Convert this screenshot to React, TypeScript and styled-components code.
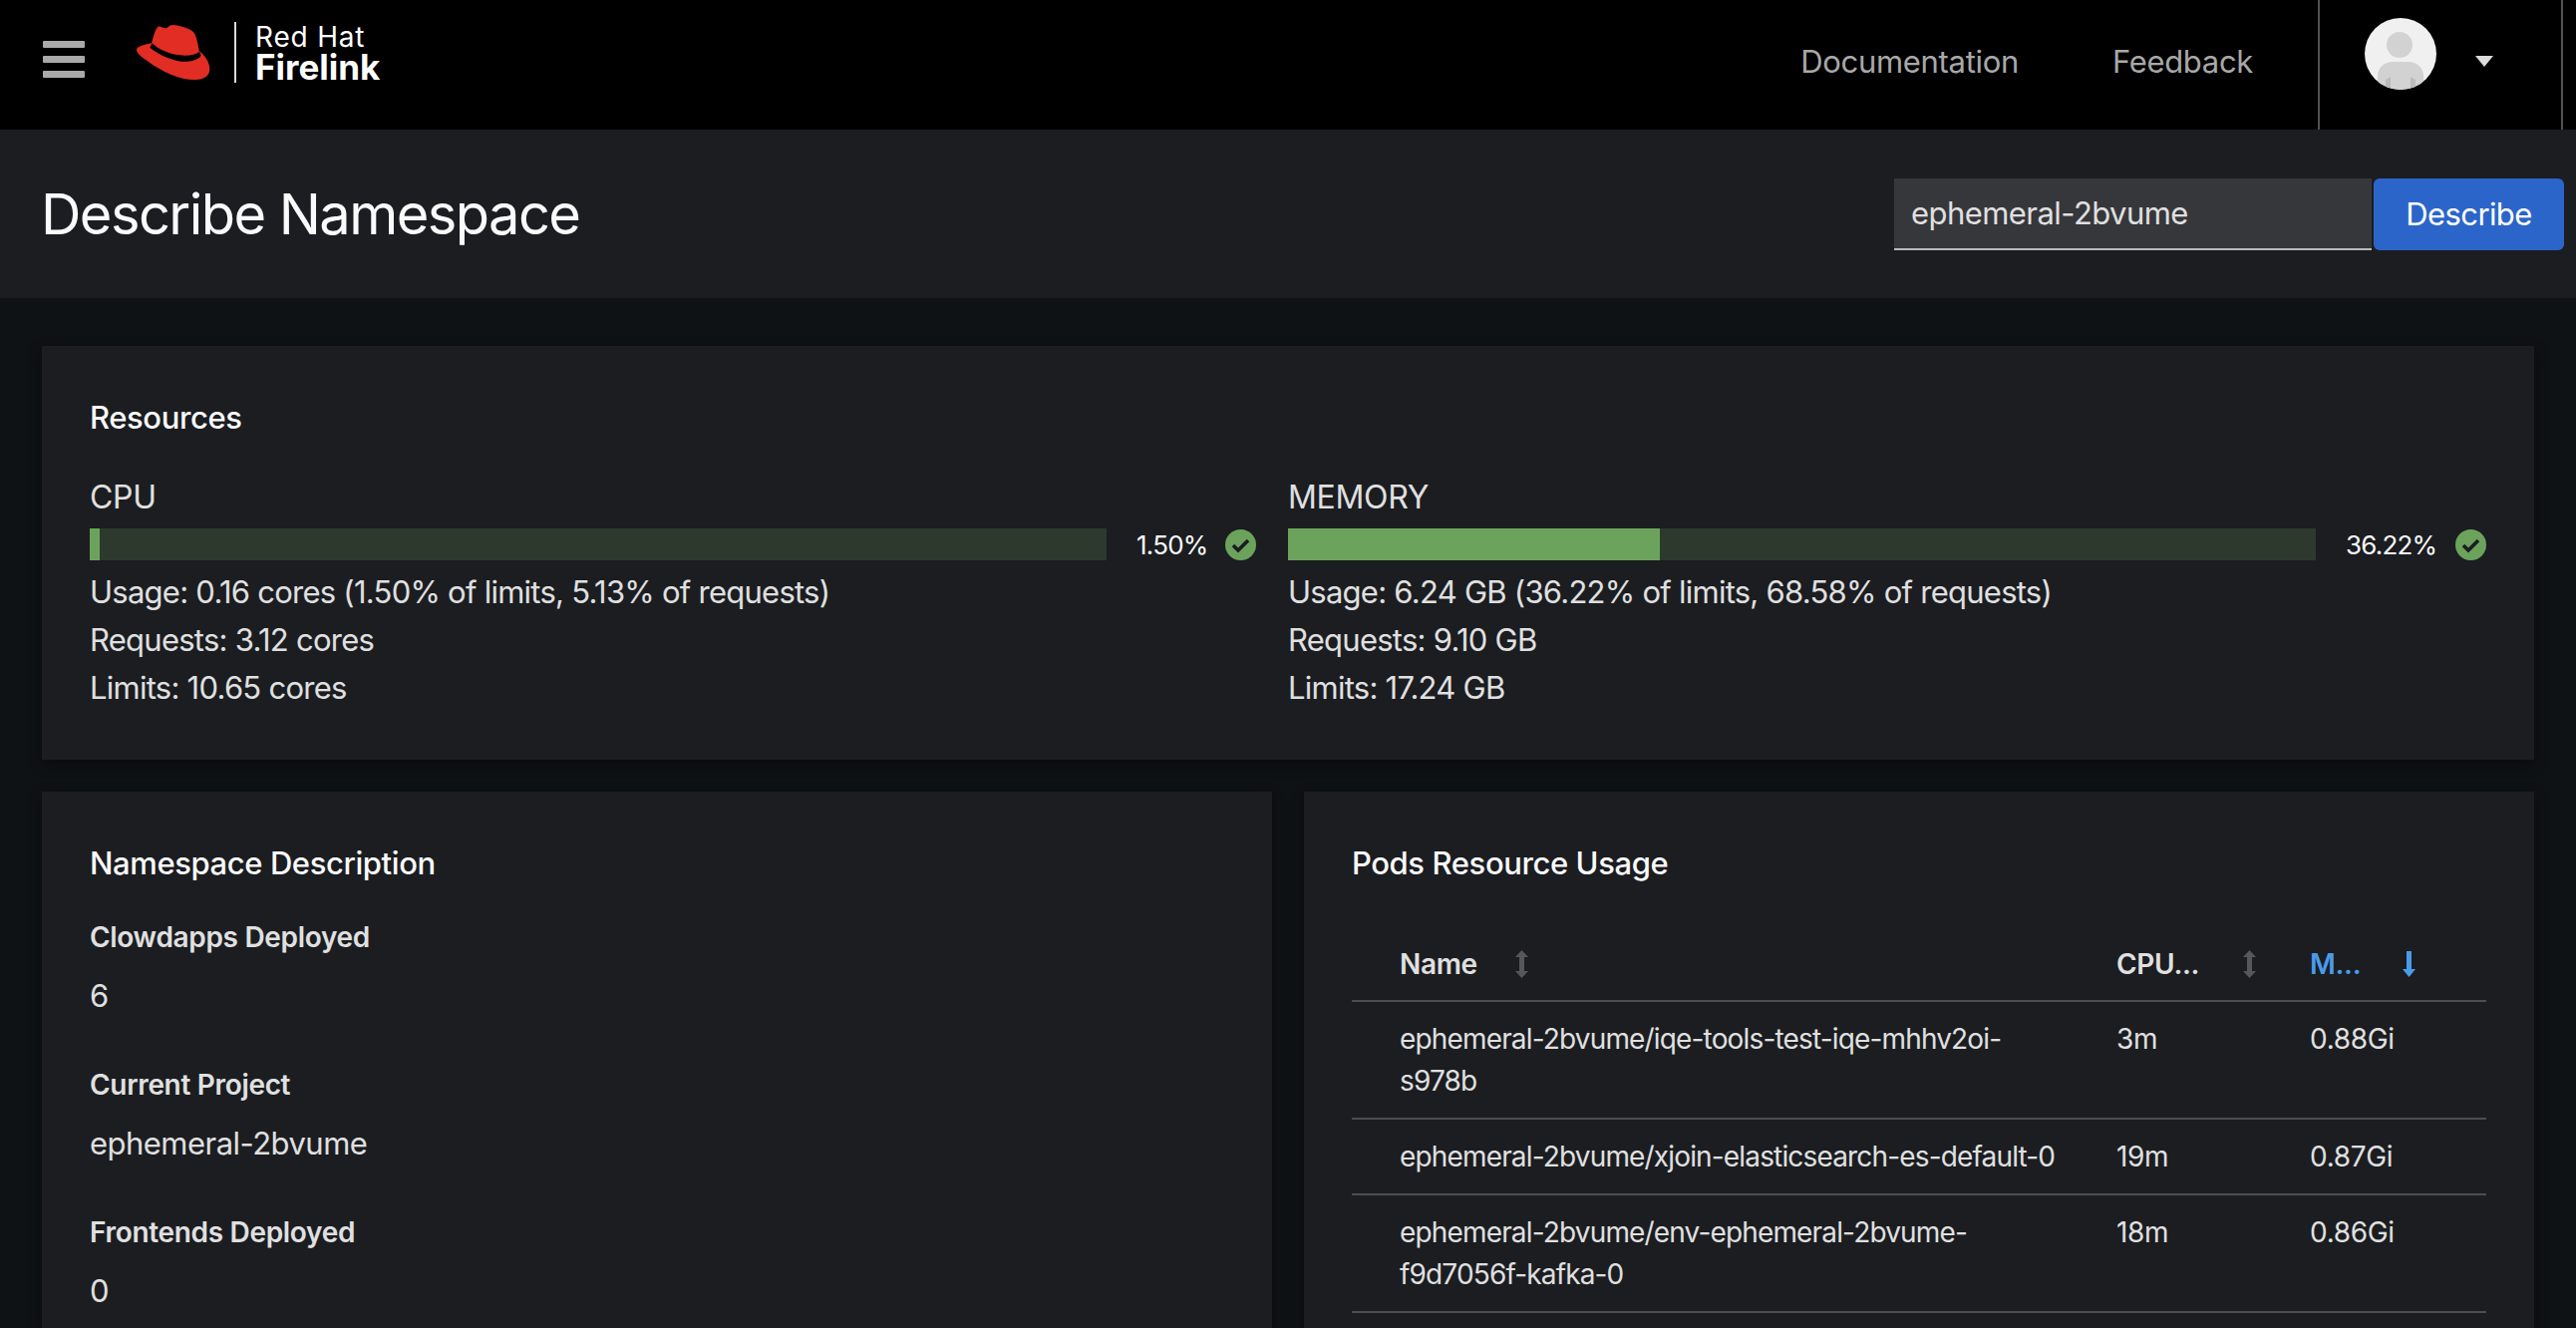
import styled, { createGlobalStyle } from 'styled-components';

const GlobalStyle = createGlobalStyle`
  html, body {
    margin: 0;
    background: #0f1214;
  }
  body {
    font-family: 'Inter', 'Liberation Sans', sans-serif;
    letter-spacing: -0.02em;
    color: #e0e0e0;
  }
`;

const Page = styled.div`
  display: flex;
  flex-direction: column;
  height: 1332px;
  overflow: hidden;
`;

const Masthead = styled.header`
  display: flex;
  align-items: stretch;
  flex: 0 0 130px;
  padding: 0 13px 0 43px;
  background: #000;
`;

const Hamburger = styled.div`
  display: flex;
  flex-direction: column;
  gap: 8px;
  width: 42px;
  margin-top: 41px;

  span {
    height: 7px;
    border-radius: 1px;
    background: #a9a9a9;
  }
`;

const Brand = styled.div`
  display: flex;
  align-items: flex-start;
  margin-left: 52px;
  padding-top: 22px;

  svg {
    margin-top: 3px;
  }
`;

const BrandDivider = styled.div`
  width: 2px;
  height: 61px;
  margin: 0 19px 0 24px;
  background: #d8d8d8;
`;

const BrandText = styled.div`
  display: flex;
  flex-direction: column;
  color: #fff;
`;

const BrandTop = styled.span`
  font-size: 28px;
  line-height: 30px;
  letter-spacing: 0.8px;
`;

const BrandBottom = styled.span`
  font-size: 35px;
  line-height: 31px;
  font-weight: 700;
  letter-spacing: 0;
`;

const MastNav = styled.nav`
  display: flex;
  align-items: center;
  gap: 94px;
  margin-left: auto;
  padding-right: 65px;
  padding-bottom: 8px;
`;

const NavLink = styled.a`
  font-size: 31px;
  color: #a8a8a8;
`;

const UserArea = styled.div`
  display: flex;
  align-items: center;
  width: 246px;
  padding-left: 45px;
  padding-bottom: 22px;
  box-sizing: border-box;
  border-left: 2px solid #4f5255;
  border-right: 2px solid #4f5255;
`;

const Caret = styled.div`
  width: 0;
  height: 0;
  margin: 14px 0 0 39px;
  border-left: 9px solid transparent;
  border-right: 9px solid transparent;
  border-top: 11px solid #dcdcdc;
`;

const TitleBar = styled.section`
  display: flex;
  align-items: center;
  justify-content: space-between;
  flex: 0 0 169px;
  padding: 0 12px 0 41px;
  background: #1b1d21;
`;

const PageTitle = styled.h1`
  margin: 0;
  font-size: 56px;
  font-weight: 400;
  letter-spacing: -0.028em;
  color: #fafafa;
`;

const SearchGroup = styled.div`
  display: flex;
  gap: 2px;
`;

const SearchInput = styled.div`
  box-sizing: border-box;
  width: 479px;
  height: 72px;
  padding: 0 17px;
  line-height: 70px;
  font-size: 31px;
  letter-spacing: -0.018em;
  color: #e0e0e0;
  background: #36373b;
  border-bottom: 2px solid #b8bbbe;
`;

const PrimaryButton = styled.button`
  width: 191px;
  height: 72px;
  padding: 0;
  border: none;
  border-radius: 6px;
  font: inherit;
  font-size: 31px;
  letter-spacing: -0.02em;
  color: #fff;
  background: #2b65c9;
`;

const Main = styled.main`
  display: flex;
  flex: 1;
  flex-direction: column;
  gap: 32px;
  min-height: 0;
  padding: 48px 42px 0;
`;

const Card = styled.div`
  padding: 48px;
  background: #1b1d21;
  box-shadow: 0 4px 12px rgba(3, 3, 3, 0.48);
`;

const CardTitle = styled.h2`
  margin: 0;
  font-size: 31px;
  line-height: 48px;
  font-weight: 500;
  letter-spacing: -0.013em;
  color: #fafafa;
`;

const ResourceGrid = styled.div`
  display: grid;
  grid-template-columns: 1170px 1202px;
  column-gap: 32px;
  margin-top: 32px;
`;

const MeterLabel = styled.div`
  font-size: 32px;
  line-height: 48px;
`;

const MeterRow = styled.div`
  display: flex;
  align-items: center;
  height: 42px;
  margin: 2px 0 3px;
`;

const Track = styled.div`
  flex: 1;
  height: 32px;
  background: #2d392d;
`;

const Fill = styled.div`
  height: 100%;
  background: #6ca35c;
`;

const MeterValue = styled.span<{ size: number }>`
  width: ${(props) => props.size}px;
  margin: 0 17px 0 30px;
  font-size: 26px;
  letter-spacing: -0.03em;
  white-space: nowrap;
  color: #fafafa;
`;

const StatLines = styled.div`
  font-size: 31px;
  line-height: 48px;
  letter-spacing: -0.024em;
`;

const LowerGrid = styled.div`
  display: grid;
  flex: 1;
  grid-template-columns: 1fr 1fr;
  column-gap: 32px;
  min-height: 0;
`;

const LowerCard = styled(Card)`
  overflow: hidden;
`;

const Field = styled.div`
  margin-top: 29px;

  & + & {
    margin-top: 44px;
  }
`;

const FieldName = styled.div`
  font-size: 28px;
  line-height: 42px;
  font-weight: 600;
`;

const FieldValue = styled.div`
  margin-top: 14px;
  font-size: 31px;
  line-height: 48px;
  letter-spacing: -0.017em;
`;

const Table = styled.table`
  width: 100%;
  margin-top: 40px;
  border-collapse: collapse;
  table-layout: fixed;
  font-size: 28px;
  line-height: 42px;
`;

const HeaderCell = styled.th<{ active?: boolean }>`
  height: 73px;
  padding: 0;
  text-align: left;
  font-weight: 600;
  color: ${(props) => (props.active ? '#4a9bea' : '#e0e0e0')};
  border-bottom: 2px solid #4b4e52;
`;

const HeaderInner = styled.div<{ gap: number; inset?: number }>`
  display: flex;
  align-items: center;
  gap: ${(props) => props.gap}px;
  padding-left: ${(props) => props.inset ?? 0}px;
`;

const BodyCell = styled.td`
  padding: 16px 0;
  vertical-align: top;
  border-bottom: 2px solid #4b4e52;
`;

const NameCell = styled(BodyCell)`
  padding-left: 48px;
  padding-right: 48px;
  letter-spacing: -0.03em;
`;

const RedHatLogo = () => (
  <svg width="74" height="55" viewBox="20 30 222 165">
    <path
      d="M85 35 C92 33 100 40 108 40 C114 40 118 30 128 30 C150 32 178 40 190 50 C198 58 202 75 205 90 L208 108 C222 118 240 140 240 162 C240 182 225 195 195 195 C150 195 95 170 55 140 C35 127 20 115 20 105 C20 96 40 90 65 85 L72 60 C76 48 80 38 85 35 Z"
      fill="#e12d23"
    />
    <path
      d="M67 85 C90 108 130 122 165 122 C185 122 200 118 209 110 L214 122 C205 136 180 142 155 140 C120 135 85 118 60 98 Z"
      fill="#000"
    />
  </svg>
);

const Avatar = () => (
  <svg width="72" height="72" viewBox="0 0 72 72">
    <clipPath id="avatar-clip">
      <circle cx="36" cy="36" r="36" />
    </clipPath>
    <g clipPath="url(#avatar-clip)">
      <rect width="72" height="72" fill="#f0f0f0" />
      <circle cx="35" cy="27" r="13" fill="#d2d2d2" />
      <path d="M13 72 V58 C13 50 20 44 28 44 H44 C52 44 59 50 59 58 V72 Z" fill="#d2d2d2" />
      <path d="M21 72 V62 L26 59 V72 Z M46 72 V59 L51 62 V72 Z" fill="#b8bbbe" />
    </g>
  </svg>
);

const CheckIcon = () => (
  <svg width="31" height="31" viewBox="0 0 31 31">
    <circle cx="15.5" cy="15.5" r="15.5" fill="#6ca35c" />
    <path d="M8 16 L13 21 L23 11" fill="none" stroke="#1b1d21" strokeWidth="3.6" />
  </svg>
);

const SortIcon = ({ active }: { active?: boolean }) =>
  active ? (
    <svg width="13" height="28" viewBox="0 0 13 28">
      <path d="M4 1 H9 V19 H13 L6.5 27 L0 19 H4 Z" fill="#4a9bea" />
    </svg>
  ) : (
    <svg width="13" height="28" viewBox="0 0 13 28">
      <path d="M6.5 0 L13 7 H9 V21 H13 L6.5 28 L0 21 H4 V7 H0 Z" fill="#54575b" />
    </svg>
  );

const meters = [
  {
    label: 'CPU',
    percent: '1.50%',
    valueSize: 72,
    fill: 1,
    lines: [
      'Usage: 0.16 cores (1.50% of limits, 5.13% of requests)',
      'Requests: 3.12 cores',
      'Limits: 10.65 cores',
    ],
  },
  {
    label: 'MEMORY',
    percent: '36.22%',
    valueSize: 93,
    fill: 36.22,
    lines: [
      'Usage: 6.24 GB (36.22% of limits, 68.58% of requests)',
      'Requests: 9.10 GB',
      'Limits: 17.24 GB',
    ],
  },
];

const fields = [
  { name: 'Clowdapps Deployed', value: '6' },
  { name: 'Current Project', value: 'ephemeral-2bvume' },
  { name: 'Frontends Deployed', value: '0' },
];

const pods = [
  { name: 'ephemeral-2bvume/iqe-tools-test-iqe-mhhv2oi-s978b', cpu: '3m', memory: '0.88Gi' },
  { name: 'ephemeral-2bvume/xjoin-elasticsearch-es-default-0', cpu: '19m', memory: '0.87Gi' },
  { name: 'ephemeral-2bvume/env-ephemeral-2bvume-f9d7056f-kafka-0', cpu: '18m', memory: '0.86Gi' },
];

export default function App() {
  return (
    <Page>
      <GlobalStyle />
      <Masthead>
        <Hamburger>
          <span />
          <span />
          <span />
        </Hamburger>
        <Brand>
          <RedHatLogo />
          <BrandDivider />
          <BrandText>
            <BrandTop>Red Hat</BrandTop>
            <BrandBottom>Firelink</BrandBottom>
          </BrandText>
        </Brand>
        <MastNav>
          <NavLink>Documentation</NavLink>
          <NavLink>Feedback</NavLink>
        </MastNav>
        <UserArea>
          <Avatar />
          <Caret />
        </UserArea>
      </Masthead>

      <TitleBar>
        <PageTitle>Describe Namespace</PageTitle>
        <SearchGroup>
          <SearchInput>ephemeral-2bvume</SearchInput>
          <PrimaryButton>Describe</PrimaryButton>
        </SearchGroup>
      </TitleBar>

      <Main>
        <Card>
          <CardTitle>Resources</CardTitle>
          <ResourceGrid>
            {meters.map((meter) => (
              <div key={meter.label}>
                <MeterLabel>{meter.label}</MeterLabel>
                <MeterRow>
                  <Track>
                    <Fill style={{ width: `${meter.fill}%` }} />
                  </Track>
                  <MeterValue size={meter.valueSize}>{meter.percent}</MeterValue>
                  <CheckIcon />
                </MeterRow>
                <StatLines>
                  {meter.lines.map((line) => (
                    <div key={line}>{line}</div>
                  ))}
                </StatLines>
              </div>
            ))}
          </ResourceGrid>
        </Card>

        <LowerGrid>
          <LowerCard>
            <CardTitle>Namespace Description</CardTitle>
            {fields.map((field) => (
              <Field key={field.name}>
                <FieldName>{field.name}</FieldName>
                <FieldValue>{field.value}</FieldValue>
              </Field>
            ))}
          </LowerCard>

          <LowerCard>
            <CardTitle>Pods Resource Usage</CardTitle>
            <Table>
              <colgroup>
                <col style={{ width: 767 }} />
                <col style={{ width: 194 }} />
                <col />
              </colgroup>
              <thead>
                <tr>
                  <HeaderCell>
                    <HeaderInner gap={38} inset={48}>
                      Name <SortIcon />
                    </HeaderInner>
                  </HeaderCell>
                  <HeaderCell>
                    <HeaderInner gap={44}>
                      CPU... <SortIcon />
                    </HeaderInner>
                  </HeaderCell>
                  <HeaderCell active>
                    <HeaderInner gap={42}>
                      M... <SortIcon active />
                    </HeaderInner>
                  </HeaderCell>
                </tr>
              </thead>
              <tbody>
                {pods.map((pod) => (
                  <tr key={pod.name}>
                    <NameCell>{pod.name}</NameCell>
                    <BodyCell>{pod.cpu}</BodyCell>
                    <BodyCell>{pod.memory}</BodyCell>
                  </tr>
                ))}
              </tbody>
            </Table>
          </LowerCard>
        </LowerGrid>
      </Main>
    </Page>
  );
}
